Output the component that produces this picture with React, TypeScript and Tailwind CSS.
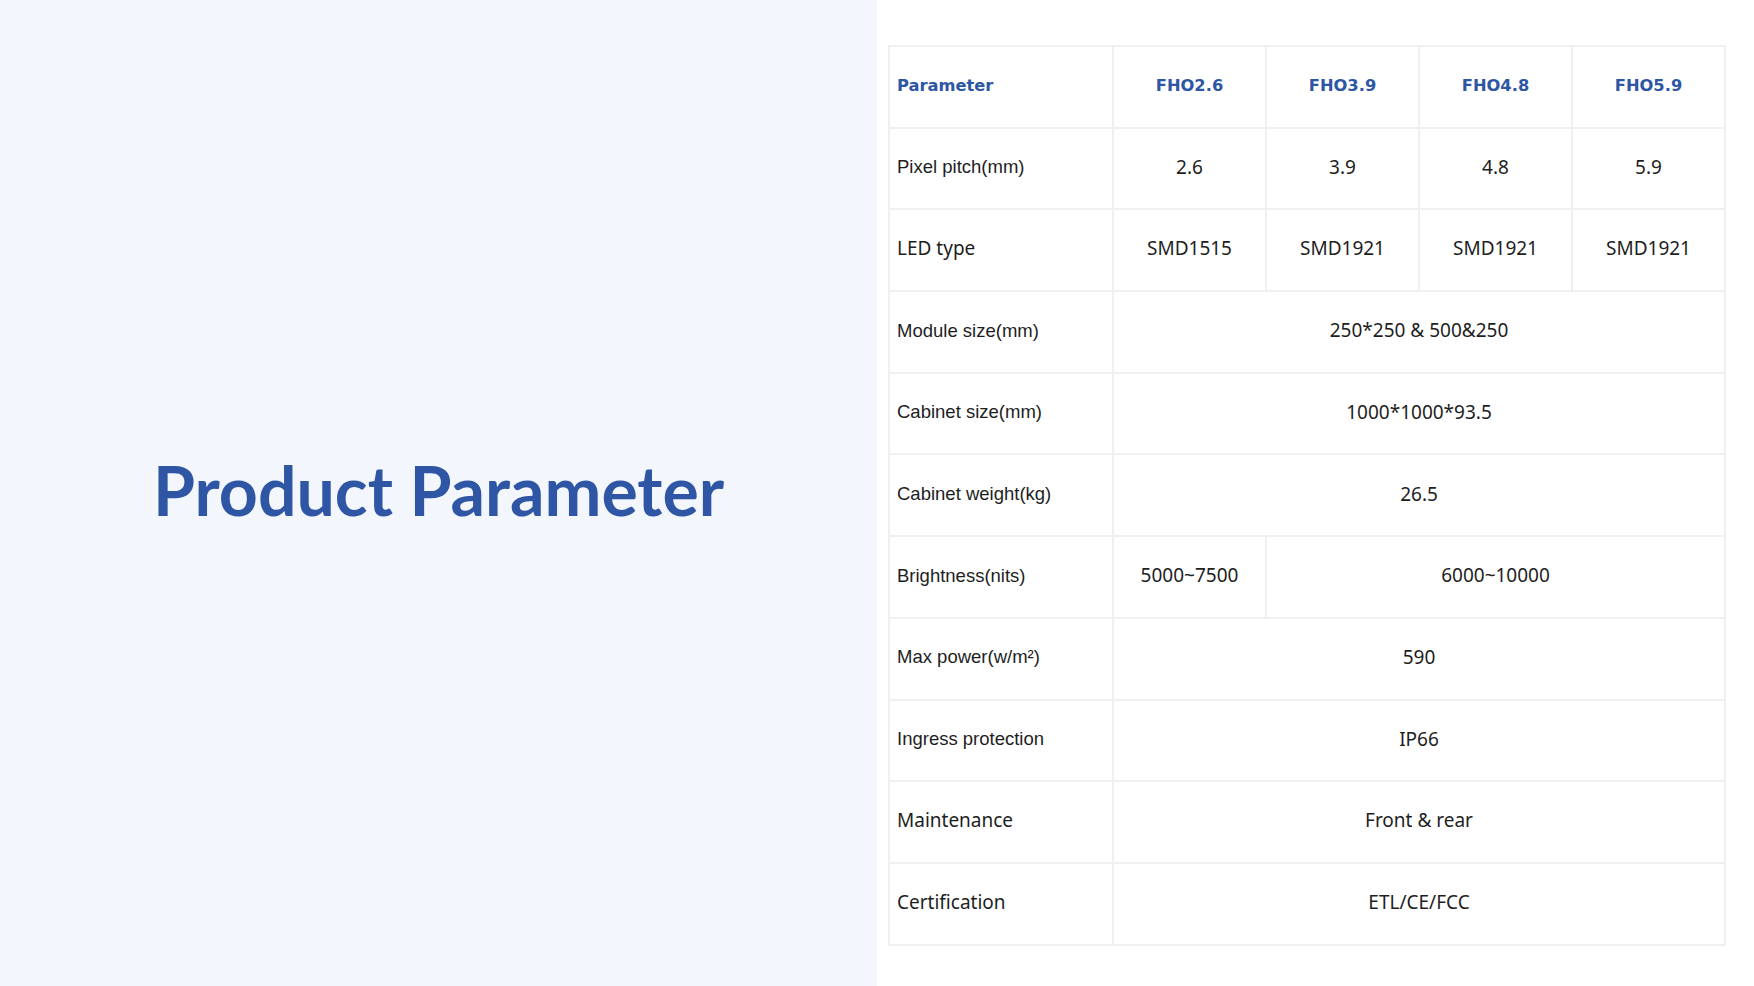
const arial = "font-['Liberation_Sans',Arial,sans-serif] text-[18.5px]";
const yahei = "font-['Noto_Sans','Open_Sans',sans-serif]";

type Cell = { text: string; span?: number };
type Row = { label: string; labelFont: string; cells: Cell[] };

const rows: Row[] = [
  {
    label: 'Pixel pitch(mm)',
    labelFont: arial,
    cells: [{ text: '2.6' }, { text: '3.9' }, { text: '4.8' }, { text: '5.9' }],
  },
  {
    label: 'LED type',
    labelFont: yahei,
    cells: [{ text: 'SMD1515' }, { text: 'SMD1921' }, { text: 'SMD1921' }, { text: 'SMD1921' }],
  },
  { label: 'Module size(mm)', labelFont: arial, cells: [{ text: '250*250 & 500&250', span: 4 }] },
  { label: 'Cabinet size(mm)', labelFont: arial, cells: [{ text: '1000*1000*93.5', span: 4 }] },
  { label: 'Cabinet weight(kg)', labelFont: arial, cells: [{ text: '26.5', span: 4 }] },
  {
    label: 'Brightness(nits)',
    labelFont: arial,
    cells: [{ text: '5000~7500' }, { text: '6000~10000', span: 3 }],
  },
  { label: 'Max power(w/m²)', labelFont: arial, cells: [{ text: '590', span: 4 }] },
  { label: 'Ingress protection', labelFont: arial, cells: [{ text: 'IP66', span: 4 }] },
  { label: 'Maintenance', labelFont: yahei, cells: [{ text: 'Front & rear', span: 4 }] },
  { label: 'Certification', labelFont: yahei, cells: [{ text: 'ETL/CE/FCC', span: 4 }] },
];

const models = ['FHO2.6', 'FHO3.9', 'FHO4.8', 'FHO5.9'];

export default function App() {
  return (
    <div className="flex h-[986px] w-[1754px] overflow-hidden bg-white">
      {/* left title panel */}
      <div className="flex h-full w-[877px] items-center justify-center bg-[#f3f6fc] pb-[6px]">
        <h1 className="font-['Lato',sans-serif] text-[68px] font-bold text-[#2f56a4]">
          Product Parameter
        </h1>
      </div>

      {/* parameter table */}
      <div className="flex-1 pl-[11px] pt-[45px]">
        <table className="w-[836px] table-fixed border-collapse text-[19px] text-[#1e1e1e]">
          <colgroup>
            <col className="w-[224px]" />
            <col className="w-[153px]" />
            <col className="w-[153px]" />
            <col className="w-[153px]" />
            <col className="w-[153px]" />
          </colgroup>
          <thead>
            <tr className="h-[81.7px]">
              <th className="border-2 border-[#f0f0f0] pb-[2px] pl-[7px] text-left font-['DejaVu_Sans',Verdana,sans-serif] text-[16.3px] font-bold text-[#2d56a5]">
                Parameter
              </th>
              {models.map((m) => (
                <th
                  key={m}
                  className="border-2 border-[#f0f0f0] pb-[2px] text-center font-['DejaVu_Sans',Verdana,sans-serif] text-[16.3px] font-bold text-[#2d56a5]"
                >
                  {m}
                </th>
              ))}
            </tr>
          </thead>
          <tbody>
            {rows.map((r) => (
              <tr key={r.label} className="h-[81.7px]">
                <td className={`border-2 border-[#f0f0f0] pb-[3px] pl-[7px] ${r.labelFont}`}>{r.label}</td>
                {r.cells.map((c, i) => (
                  <td
                    key={i}
                    colSpan={c.span ?? 1}
                    className={`border-2 border-[#f0f0f0] pb-[3px] text-center ${yahei}`}
                  >
                    {c.text}
                  </td>
                ))}
              </tr>
            ))}
          </tbody>
        </table>
      </div>
    </div>
  );
}
